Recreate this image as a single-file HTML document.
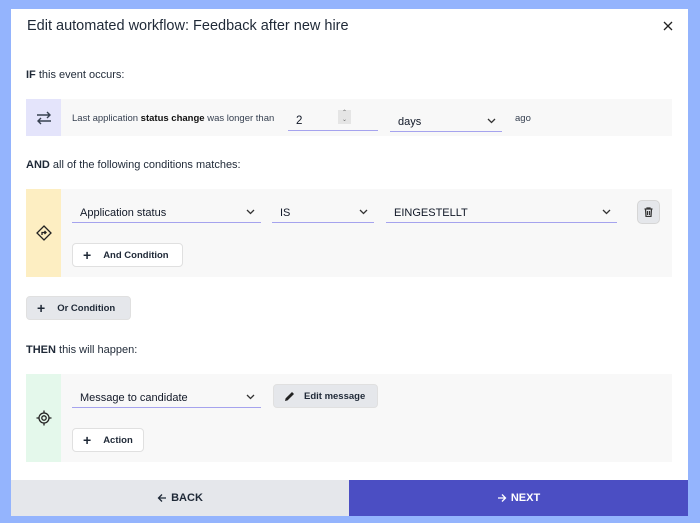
<!DOCTYPE html><html><head><style>
*{box-sizing:border-box;margin:0;padding:0}
body{width:700px;height:523px;background:#94b4fd;font-family:"Liberation Sans",sans-serif;color:#1f2937;position:relative;overflow:hidden}
.m{position:absolute;left:11px;top:9px;width:677px;height:507px;background:#fff}
.a{position:absolute}
.t{font-size:11px}
.box{position:absolute;left:26px;width:646px;background:#f8f8f8}
.ic{position:absolute;left:0;top:0;bottom:0;width:35px;display:flex;align-items:center;justify-content:center}
.sel{position:absolute;height:22px;border-bottom:1.5px solid #a5a3ee;font-size:11px;padding:6px 0 0 8px;color:#111827}
.sel svg{position:absolute;right:6px;top:8px}
.btn{position:absolute;height:24px;border:1px solid #e0e0e0;border-radius:4px;background:#fff;font-size:9.5px;font-weight:bold;display:flex;align-items:center;padding-left:10px;color:#1f2937}
.btn b{font-size:14px;margin-right:12px;font-weight:bold}
</style></head><body>
<div class="m">
<div class="a" style="left:16px;top:9px;font-size:14.5px;color:#1f2937">Edit automated workflow: Feedback after new hire</div>
<svg class="a" style="left:652px;top:12px" width="10" height="10" viewBox="0 0 10 10" stroke="#222" stroke-width="1.3"><path d="M1 1l8 8M9 1l-8 8"/></svg>
</div>
<div class="a t" style="left:26px;top:69px"><b>IF</b> this event occurs:</div>
<div class="box" style="top:99px;height:37px">
<div class="ic" style="background:#e4e4fb"><svg width="16" height="14" viewBox="0 0 16 14" fill="none" stroke="#374151" stroke-width="1.4"><path d="M1 4h13M11 1l3 3-3 3M15 10H2M5 7l-3 3 3 3"/></svg></div>
</div>
<div class="a" style="left:72px;top:113px;font-size:9.5px;color:#374151">Last application <b style="color:#111">status change</b> was longer than</div>
<div class="sel" style="left:288px;top:109px;width:90px;font-size:11.5px">2<span style="position:absolute;left:50px;top:1px;width:13px;height:14px;background:#e5e5e5;font-size:6px;line-height:7px;text-align:center;color:#666">⌃<br>⌄</span></div>
<div class="sel" style="left:390px;top:110px;width:112px">days<svg width="9" height="6" viewBox="0 0 9 6" fill="none" stroke="#333" stroke-width="1.3"><path d="M1 1l3.5 3.5L8 1"/></svg></div>
<div class="a" style="left:515px;top:113px;font-size:9.5px;color:#374151">ago</div>

<div class="a t" style="left:26px;top:159px"><b>AND</b> all of the following conditions matches:</div>
<div class="box" style="top:189px;height:88px">
<div class="ic" style="background:#fdeec2"><svg width="16" height="16" viewBox="0 0 16 16" fill="none" stroke="#222" stroke-width="1.3"><path d="M8 1l7 7-7 7-7-7z"/><path d="M6 10V7.5h4M8.5 6l1.5 1.5L8.5 9"/></svg></div>
</div>
<div class="sel" style="left:72px;top:201px;width:189px">Application status<svg width="9" height="6" viewBox="0 0 9 6" fill="none" stroke="#333" stroke-width="1.3"><path d="M1 1l3.5 3.5L8 1"/></svg></div>
<div class="sel" style="left:272px;top:201px;width:102px">IS<svg width="9" height="6" viewBox="0 0 9 6" fill="none" stroke="#333" stroke-width="1.3"><path d="M1 1l3.5 3.5L8 1"/></svg></div>
<div class="sel" style="left:386px;top:201px;width:231px">EINGESTELLT<svg width="9" height="6" viewBox="0 0 9 6" fill="none" stroke="#333" stroke-width="1.3"><path d="M1 1l3.5 3.5L8 1"/></svg></div>
<div class="a" style="left:637px;top:200px;width:23px;height:24px;background:#e5e7eb;border:1px solid #d6d6d6;border-radius:5px;display:flex;align-items:center;justify-content:center"><svg width="9" height="10" viewBox="0 0 9 10" fill="none" stroke="#333" stroke-width="1.2"><path d="M0.5 2h8M3 2V1h3v1M1.5 2l.5 7.5h5L7.5 2M3.5 4v4M5.5 4v4"/></svg></div>
<div class="btn" style="left:72px;top:243px;width:111px"><b>+</b>And Condition</div>
<div class="btn" style="left:26px;top:296px;width:105px;background:#e5e7eb"><b>+</b>Or Condition</div>

<div class="a t" style="left:26px;top:344px"><b>THEN</b> this will happen:</div>
<div class="box" style="top:374px;height:88px">
<div class="ic" style="background:#e4f8eb"><svg width="16" height="16" viewBox="0 0 16 16" fill="none" stroke="#222" stroke-width="1.3"><circle cx="8" cy="8" r="5"/><circle cx="8" cy="8" r="2.2"/><path d="M8 0.5v2.5M8 13v2.5M0.5 8h2.5M13 8h2.5"/></svg></div>
</div>
<div class="sel" style="left:72px;top:386px;width:189px">Message to candidate<svg width="9" height="6" viewBox="0 0 9 6" fill="none" stroke="#333" stroke-width="1.3"><path d="M1 1l3.5 3.5L8 1"/></svg></div>
<div class="btn" style="left:273px;top:384px;width:105px;background:#e5e7eb"><svg width="11" height="11" viewBox="0 0 11 11" style="margin-right:9px"><path d="M1 10l.6-2.6L8 1l2 2-6.4 6.4z" fill="#222"/></svg>Edit message</div>
<div class="btn" style="left:72px;top:428px;width:72px"><b>+</b>Action</div>

<div class="a" style="left:11px;top:480px;width:338px;height:36px;background:#e5e7eb;display:flex;align-items:center;justify-content:center;font-size:11px;font-weight:bold;color:#1f2937"><svg width="10" height="10" viewBox="0 0 10 10" fill="none" stroke="#1f2937" stroke-width="1.3" style="margin-right:4px"><path d="M9 5H1.5M5 1.5L1.5 5 5 8.5"/></svg>BACK</div>
<div class="a" style="left:349px;top:480px;width:339px;height:36px;background:#4b4ec3;display:flex;align-items:center;justify-content:center;font-size:11px;font-weight:bold;color:#fff"><svg width="10" height="10" viewBox="0 0 10 10" fill="none" stroke="#fff" stroke-width="1.3" style="margin-right:4px"><path d="M1 5h7.5M5 1.5L8.5 5 5 8.5"/></svg>NEXT</div>
</body></html>
